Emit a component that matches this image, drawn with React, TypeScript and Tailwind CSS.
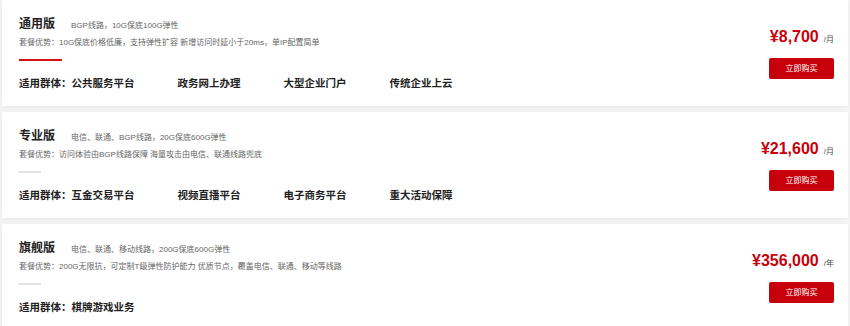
import React from "react";

type Plan = {
  name: string;
  lines: string;
  advantage: string;
  groups: string[];
  price: string;
  unit: string;
  active?: boolean;
};

const plans: Plan[] = [
  {
    name: "通用版",
    lines: "BGP线路，10G保底100G弹性",
    advantage: "套餐优势：10G保底价格低廉，支持弹性扩容 新增访问时延小于20ms，单IP配置简单",
    groups: ["公共服务平台", "政务网上办理", "大型企业门户", "传统企业上云"],
    price: "¥8,700",
    unit: "/月",
    active: true,
  },
  {
    name: "专业版",
    lines: "电信、联通、BGP线路，20G保底600G弹性",
    advantage: "套餐优势：访问体验由BGP线路保障 海量攻击由电信、联通线路兜底",
    groups: ["互金交易平台", "视频直播平台", "电子商务平台", "重大活动保障"],
    price: "¥21,600",
    unit: "/月",
  },
  {
    name: "旗舰版",
    lines: "电信、联通、移动线路，200G保底600G弹性",
    advantage: "套餐优势：200G无限抗，可定制T级弹性防护能力 优质节点，覆盖电信、联通、移动等线路",
    groups: ["棋牌游戏业务"],
    price: "¥356,000",
    unit: "/年",
  },
];

const font = "font-['Liberation_Sans','Noto_Sans_CJK_SC',sans-serif]";
const cjk = "font-['Noto_Sans_CJK_SC',sans-serif]";

function PlanCard({ plan }: { plan: Plan }) {
  return (
    <div className="flex h-[106px] shrink-0 bg-white pl-[17px] pr-[14px] shadow-[0_1px_5px_rgba(0,0,0,0.06)]">
      <div className="flex-1">
        {/* title + lines */}
        <div className="mt-[15px] flex h-[16px] items-baseline">
          <span className={`${cjk} text-[12px] leading-[16px] font-bold text-[#222]`}>{plan.name}</span>
          <span className="ml-[16px] text-[8px] text-[#666]">{plan.lines}</span>
        </div>

        <div className="mt-[7px] h-[10px] text-[8px] leading-[10px] text-[#666]">{plan.advantage}</div>

        <div
          className={
            plan.active
              ? "mt-[11px] h-[2px] w-[43px] bg-[#d4121a]"
              : "mt-[11px] h-[2px] w-[22px] bg-[#e2e2e2]"
          }
        />

        {/* groups */}
        <div className={`${cjk} mt-[14px] flex h-[16px] gap-[43px] text-[10.5px] leading-[16px] font-bold text-[#222]`}>
          {plan.groups.map((g, i) => (
            <span key={g}>{i === 0 ? "适用群体：" + g : g}</span>
          ))}
        </div>
      </div>

      <div className="flex flex-col items-end">
        <div className="mt-[27px] flex h-[20px] items-baseline">
          <span className="text-[16px] leading-[20px] font-bold text-[#c8000b]">{plan.price}</span>
          <span className="ml-[5px] text-[8px] text-[#444]">{plan.unit}</span>
        </div>
        <button className="mt-[11px] flex h-[21px] w-[65px] items-center justify-center rounded-[2px] bg-[#c8000b] text-[8px] text-white">
          立即购买
        </button>
      </div>
    </div>
  );
}

export default function App() {
  return (
    <div className={`${font} flex h-[326px] w-[850px] flex-col gap-[6px] overflow-hidden bg-[#f5f5f5] px-[2px]`}>
      {plans.map((p) => (
        <PlanCard key={p.name} plan={p} />
      ))}
    </div>
  );
}
